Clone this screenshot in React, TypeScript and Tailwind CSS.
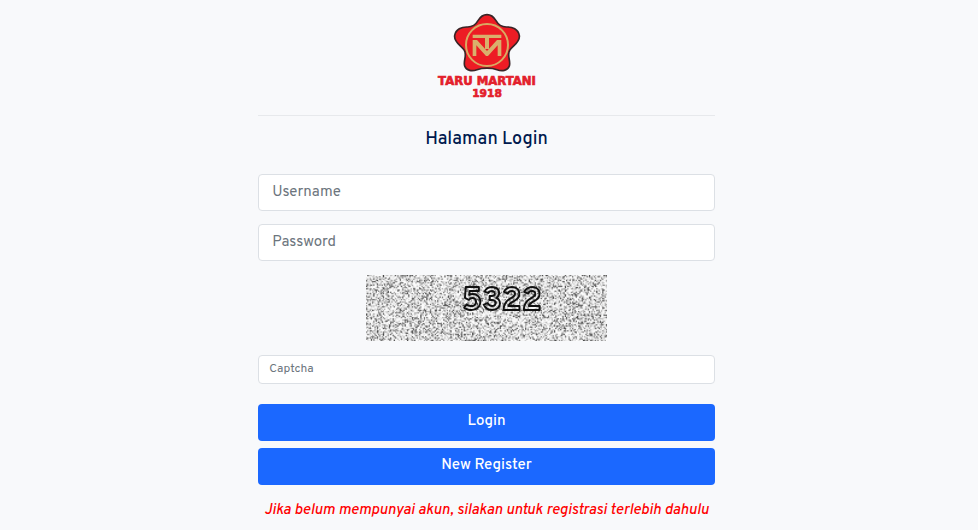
import { FormEvent, useEffect, useRef } from 'react'

const inputClass =
  'block w-full rounded border border-[#dce0e5] bg-white text-gray-700 placeholder:text-[#6c757d] focus:border-blue-400 focus:outline-none'
const buttonClass =
  'block h-[37px] w-full rounded bg-[#1b68ff] text-[15px] font-medium text-white hover:bg-blue-700'

function Logo() {
  return (
    <svg viewBox="0 0 360 300" className="h-[100px] w-[120px]" role="img" aria-label="Taru Martani 1918">
      <path
        d="M180 29C192 29 201 37 207 47C213 58 222 66 238 66C256 65 274 73 277 92C280 112 257 122 248 136C239 151 252 168 247 183C242 198 224 199 210 194C194 188 166 188 150 194C136 199 118 198 113 183C108 168 121 151 112 136C103 122 80 112 83 92C86 73 104 65 122 66C138 66 147 58 153 47C159 37 168 29 180 29Z"
        fill="#ed1c24"
        stroke="#3a2527"
        strokeWidth="5"
      />
      <circle cx="180" cy="120" r="63" fill="none" stroke="#d9aa62" strokeWidth="6" />
      <path d="M137 89H223V99H186V132H174V99H137Z" fill="#d9b06c" />
      <path d="M137 153V105H150L180 138L210 105H223V153H212V121L183 153H177L148 121V153Z" fill="#d9b06c" />
      <g
        fill="#e3202b"
        stroke="#e3202b"
        strokeWidth="2"
        textAnchor="middle"
        fontWeight="bold"
        fontFamily="'DejaVu Sans', sans-serif"
      >
        <text x="180" y="240" fontSize="35">TARU MARTANI</text>
        <text x="180" y="275" fontSize="32">1918</text>
      </g>
    </svg>
  )
}

function CaptchaImage() {
  const canvasRef = useRef<HTMLCanvasElement>(null)

  useEffect(() => {
    const canvas = canvasRef.current
    const ctx = canvas?.getContext('2d')
    if (!canvas || !ctx) return
    const image = ctx.createImageData(canvas.width, canvas.height)
    // mulberry32, so the grain is the same on every render
    let seed = 5322
    const random = () => {
      seed = (seed + 0x6d2b79f5) | 0
      let t = Math.imul(seed ^ (seed >>> 15), 1 | seed)
      t = (t + Math.imul(t ^ (t >>> 7), 61 | t)) ^ t
      return ((t ^ (t >>> 14)) >>> 0) / 4294967296
    }
    for (let i = 0; i < image.data.length; i += 4) {
      const shade = 253 - Math.floor(Math.pow(random(), 2.8) * 190)
      image.data[i] = shade
      image.data[i + 1] = shade
      image.data[i + 2] = shade
      image.data[i + 3] = 255
    }
    ctx.putImageData(image, 0, 0)
  }, [])

  return (
    <div className="mx-auto grid h-[66px] w-[241px]">
      <canvas ref={canvasRef} width={200} height={55} className="col-start-1 row-start-1 h-[66px] w-[241px]" />
      <svg viewBox="0 0 241 66" className="col-start-1 row-start-1 h-[66px] w-[241px]" role="img" aria-label="Captcha 5322">
        <text
          x="136"
          y="35"
          textAnchor="middle"
          fontSize="33"
          fontWeight="bold"
          fontFamily="'Overpass', 'DejaVu Sans', sans-serif"
          fill="none"
          stroke="#111"
          strokeWidth="2"
          strokeLinejoin="round"
        >
          5322
        </text>
      </svg>
    </div>
  )
}

export default function App() {
  const handleSubmit = (e: FormEvent) => e.preventDefault()

  return (
    <main className="flex min-h-screen justify-center bg-[#f8f9fb] pr-[5px] font-['Overpass','Roboto',sans-serif]">
      <div className="w-1/2 px-[15px] pt-[5px] text-center">
        <a href="#" className="flex justify-center">
          <Logo />
        </a>
        <hr className="mt-[10px] border-[#e7e9ec]" />
        <h1 className="mt-[10px] text-lg leading-7 font-medium text-[#001a4e]">Halaman Login</h1>

        <form onSubmit={handleSubmit} className="mt-5">
          <input
            type="text"
            aria-label="Username"
            placeholder="Username"
            className={`${inputClass} h-[37px] px-[13px] text-[15px]`}
          />
          <input
            type="password"
            aria-label="Password"
            placeholder="Password"
            className={`${inputClass} mt-[13px] h-[37px] px-[13px] text-[15px]`}
          />
          <div className="my-[14px]">
            <CaptchaImage />
          </div>
          <input
            type="text"
            aria-label="Captcha"
            placeholder="Captcha"
            className={`${inputClass} h-[29px] px-[10px] pb-0.5 text-xs`}
          />
          <button type="submit" className={`${buttonClass} mt-5`}>
            Login
          </button>
          <button type="button" className={`${buttonClass} mt-[7px]`}>
            New Register
          </button>
        </form>

        <p className="mt-4 text-[15px] leading-5 font-medium text-[#ff0000] italic">
          Jika belum mempunyai akun, silakan untuk registrasi terlebih dahulu
        </p>
      </div>
    </main>
  )
}
